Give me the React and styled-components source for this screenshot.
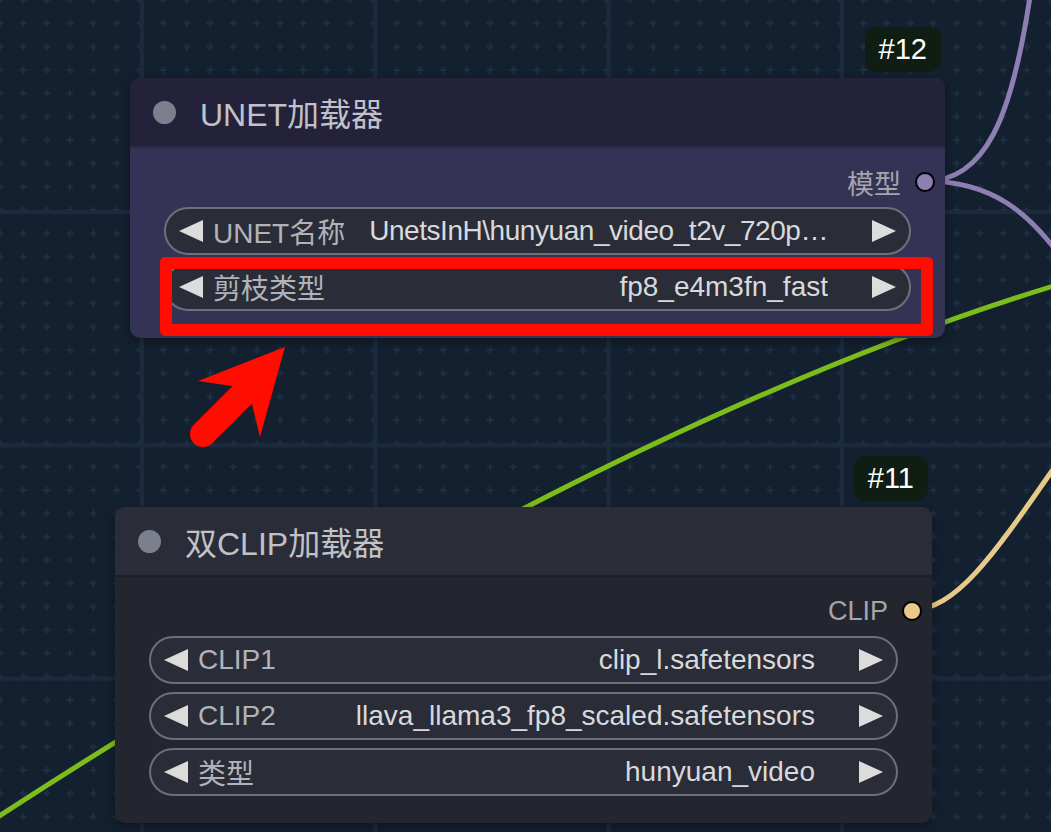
import React from 'react';
import styled, { createGlobalStyle } from 'styled-components';

const GlobalStyle = createGlobalStyle`
  html, body {
    margin: 0;
    padding: 0;
    background: #13202f;
    overflow: hidden;
  }
  body {
    font-family: "Liberation Sans", "Noto Sans CJK SC", sans-serif;
  }
`;

const themes = {
  purple: { title: '#24223a', body: '#353355', divider: '#2b2945' },
  gray: { title: '#2a2d37', body: '#23252f', divider: '#1e2028' },
};

const nodes = [
  {
    id: 12,
    title: 'UNET加载器',
    x: 130,
    y: 78,
    w: 815,
    theme: 'purple',
    output: { label: '模型', color: '#8e7fb2' },
    widgets: [
      { label: 'UNET名称', value: 'UnetsInH\\hunyuan_video_t2v_720p…', tight: true },
      { label: '剪枝类型', value: 'fp8_e4m3fn_fast' },
    ],
  },
  {
    id: 11,
    title: '双CLIP加载器',
    x: 115,
    y: 507,
    w: 817,
    theme: 'gray',
    output: { label: 'CLIP', color: '#e9c98a' },
    widgets: [
      { label: 'CLIP1', value: 'clip_l.safetensors' },
      { label: 'CLIP2', value: 'llava_llama3_fp8_scaled.safetensors' },
      { label: '类型', value: 'hunyuan_video' },
    ],
  },
];

const Canvas = styled.div`
  position: relative;
  width: 1051px;
  height: 832px;
  overflow: hidden;
  background: #13202f;
`;

const Layer = styled.svg`
  position: absolute;
  inset: 0;
  width: 100%;
  height: 100%;
  pointer-events: none;
`;

const Node = styled.div`
  position: absolute;
  left: ${(p) => p.$x}px;
  top: ${(p) => p.$y}px;
  width: ${(p) => p.$w}px;
  border-radius: 10px;
  background: ${(p) => themes[p.$theme].body};
  box-shadow: 0 3px 8px rgba(0, 0, 0, 0.35);
`;

const Badge = styled.div`
  position: absolute;
  right: 4px;
  top: -51px;
  height: 45px;
  padding: 0 14px;
  border-radius: 10px;
  background: #0f1d13;
  color: #ffffff;
  font-size: 29px;
  display: flex;
  align-items: center;
`;

const TitleBar = styled.div`
  height: 68px;
  display: flex;
  align-items: center;
  gap: 24px;
  padding-left: 23px;
  border-radius: 10px 10px 0 0;
  background: ${(p) => themes[p.$theme].title};
  border-bottom: 2px solid ${(p) => themes[p.$theme].divider};
`;

const TitleDot = styled.span`
  width: 23px;
  height: 23px;
  border-radius: 50%;
  background: #7b808c;
  flex-shrink: 0;
`;

const TitleText = styled.span`
  color: #c0c2c8;
  font-size: 32px;
`;

const Body = styled.div`
  display: flex;
  flex-direction: column;
  gap: 8px;
  padding: 14px 34px 27px;
`;

const OutputRow = styled.div`
  height: 40px;
  margin: 0 -24px -3px 0;
  display: flex;
  align-items: center;
  justify-content: flex-end;
  gap: 14px;
  color: #a3a5ab;
  font-size: 27px;
`;

const Slot = styled.span`
  width: 16px;
  height: 16px;
  border-radius: 50%;
  border: 2px solid #000;
  background: ${(p) => p.$color};
`;

const Widget = styled.div`
  box-sizing: border-box;
  height: 48px;
  border: 2px solid #6c707c;
  border-radius: 24px;
  background: #2a2d37;
  display: flex;
  align-items: center;
  padding: 0 13px;
  font-size: 28px;
  white-space: nowrap;
`;

const Arrow = styled.span`
  width: 0;
  height: 0;
  flex-shrink: 0;
  border-top: 11px solid transparent;
  border-bottom: 11px solid transparent;
  ${(p) => (p.$dir === 'left' ? 'border-right' : 'border-left')}: 24px solid #dcdcdc;
`;

const Label = styled.span`
  color: #b1b3b9;
  margin-left: 10px;
  flex-shrink: 0;
`;

const Value = styled.span`
  flex: 1;
  min-width: 0;
  margin: 0 44px 0 8px;
  text-align: right;
  color: #d8d9dc;
  letter-spacing: ${(p) => (p.$tight ? '-0.45px' : '0')};
  overflow: hidden;
  text-overflow: ellipsis;
`;

const Highlight = styled.div`
  position: absolute;
  left: 160px;
  top: 257px;
  width: 773px;
  height: 79px;
  box-sizing: border-box;
  border: 12px solid #ff0d00;
  border-radius: 5px;
`;

const GridBackground = () => (
  <Layer>
    <defs>
      <pattern id="minor" x="-11.667" y="-11.667" width="23.333" height="23.333" patternUnits="userSpaceOnUse">
        <rect x="8.2" y="10.7" width="7" height="2" fill="#1e2f43" />
        <rect x="10.7" y="8.2" width="2" height="7" fill="#1e2f43" />
      </pattern>
      <pattern id="major" x="142" y="212" width="233.333" height="233.333" patternUnits="userSpaceOnUse">
        <rect x="0" y="0" width="2" height="233.333" fill="#1b2b3d" />
        <rect x="231.333" y="0" width="2" height="233.333" fill="#1b2b3d" />
        <rect x="0" y="0" width="233.333" height="2" fill="#1b2b3d" />
        <rect x="0" y="231.333" width="233.333" height="2" fill="#1b2b3d" />
      </pattern>
    </defs>
    <rect width="100%" height="100%" fill="url(#minor)" />
    <rect width="100%" height="100%" fill="url(#major)" />
  </Layer>
);

const Links = () => (
  <Layer>
    <g fill="none" strokeWidth="5" strokeLinecap="round">
      <path d="M -10 822 Q 605 422 1060 284" stroke="#7cbd1c" />
      <path d="M 925 181 C 985 181 1012 120 1031 -10" stroke="#8e7fb2" />
      <path d="M 925 181 C 990 181 1030 210 1070 270" stroke="#8e7fb2" />
      <path d="M 911 610 C 960 610 1000 545 1070 445" stroke="#e9c98a" />
    </g>
  </Layer>
);

const PointerArrow = () => (
  <Layer>
    <line x1="246" y1="391" x2="203" y2="434" stroke="#ff0d00" strokeWidth="26" strokeLinecap="round" />
    <polygon points="285,347 198,381 232,386 252,404 260,437" fill="#ff0d00" />
  </Layer>
);

const GraphNode = ({ node }) => (
  <Node $x={node.x} $y={node.y} $w={node.w} $theme={node.theme}>
    <Badge>#{node.id}</Badge>
    <TitleBar $theme={node.theme}>
      <TitleDot />
      <TitleText>{node.title}</TitleText>
    </TitleBar>
    <Body>
      <OutputRow>
        {node.output.label}
        <Slot $color={node.output.color} />
      </OutputRow>
      {node.widgets.map((w) => (
        <Widget key={w.label}>
          <Arrow $dir="left" />
          <Label>{w.label}</Label>
          <Value $tight={w.tight}>{w.value}</Value>
          <Arrow $dir="right" />
        </Widget>
      ))}
    </Body>
  </Node>
);

export default function App() {
  return (
    <Canvas>
      <GlobalStyle />
      <GridBackground />
      <Links />
      {nodes.map((n) => (
        <GraphNode key={n.id} node={n} />
      ))}
      <Highlight />
      <PointerArrow />
    </Canvas>
  );
}
